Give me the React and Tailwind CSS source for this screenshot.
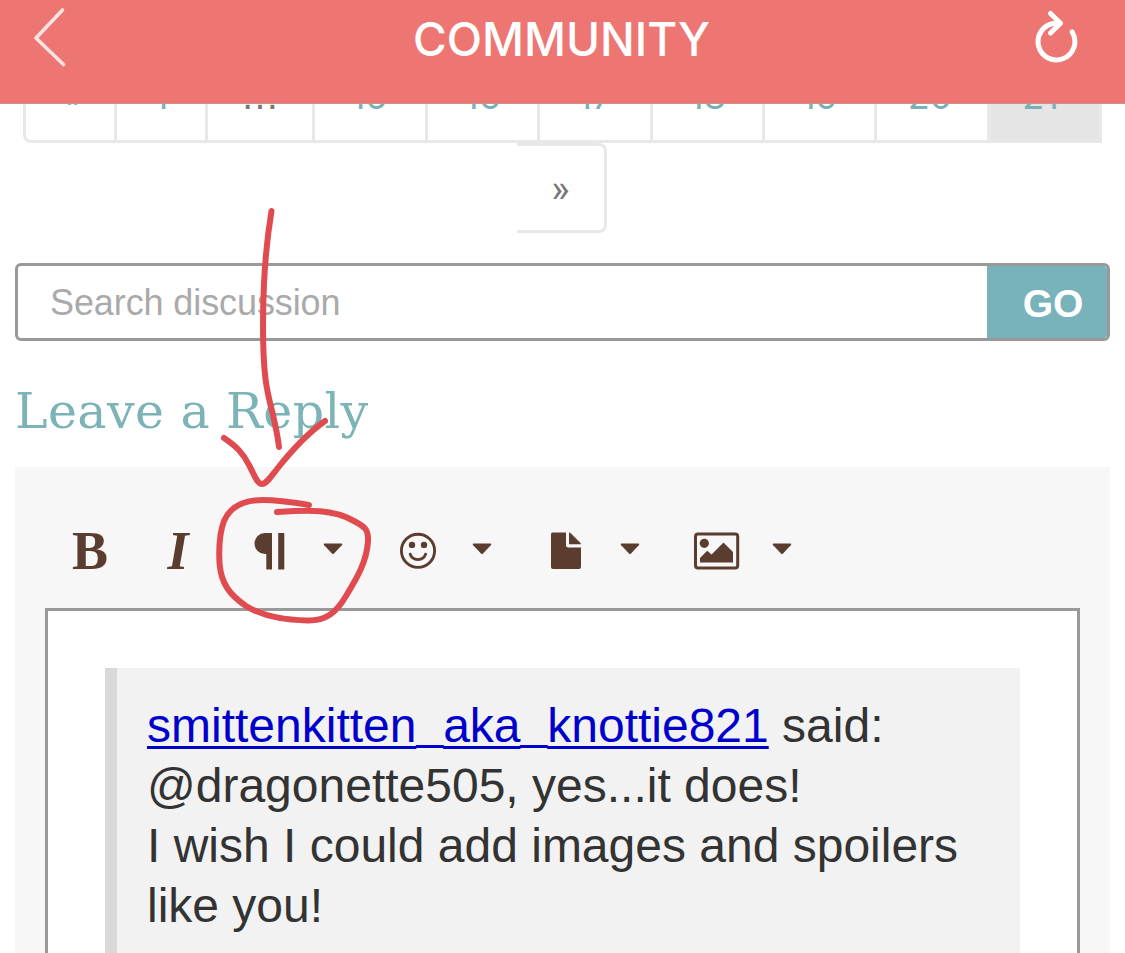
const pages = [
  { label: "«", className: "w-[91px] rounded-bl-lg pb-[2px] font-[Roboto,sans-serif] text-[38px] text-[#7bb0b6]" },
  { label: "1", className: "w-[91px] pb-[2px] text-[#7bb0b6]" },
  { label: "…", className: "w-[107px] font-['Liberation_Sans',sans-serif] text-[39px] text-[#777777]" },
  { label: "15", className: "w-[113px] pr-[2px] pb-[2px] text-[#7bb0b6]" },
  { label: "16", className: "w-[112px] pb-[2px] text-[#7bb0b6]" },
  { label: "17", className: "w-[113px] pb-[2px] text-[#7bb0b6]" },
  { label: "18", className: "w-[112px] pb-[2px] text-[#7bb0b6]" },
  { label: "19", className: "w-[112px] pb-[2px] text-[#7bb0b6]" },
  { label: "20", className: "w-[113px] pr-[4px] pb-[2px] text-[#7bb0b6]" },
  { label: "21", className: "w-[115px] border-r-[3px] bg-[#e5e5e5] pr-[8px] pb-[2px] text-[#7bb0b6]" },
];

function Header() {
  return (
    <header className="relative z-10 flex h-[104px] items-start justify-between border-b border-[#c98f8d] bg-[#ee7672] pl-[33px] pr-[46px]">
      <button className="mt-[7px]" aria-label="Back">
        <svg width="34" height="62" viewBox="0 0 34 62" fill="none" stroke="#fde3e2" strokeWidth="3.6" strokeLinecap="round" strokeLinejoin="round">
          <path d="M29.5 3 L3 31 L30.5 57.5" />
        </svg>
      </button>
      <h1 className="mt-[8px] ml-[23px] font-[Inter,sans-serif] text-[46px] leading-[62px] font-medium text-white">
        COMMUNITY
      </h1>
      <button className="mt-[9px]" aria-label="Refresh">
        <svg width="46" height="56" viewBox="0 0 46 56" fill="none" stroke="#fff" strokeWidth="5" strokeLinecap="round" strokeLinejoin="round">
          <path d="M39.200 23 A18.400 18.400 0 1 1 22 14.200 H27" />
          <path d="M17.500 4.500 L27.500 14.200 L17.500 24" />
        </svg>
      </button>
    </header>
  );
}

function Pagination() {
  return (
    <nav className="-mt-[51px] font-[Inter,sans-serif] text-[36px]">
      <div className="ml-[23px] flex h-[90px]">
        {pages.map((page) => (
          <a
            key={page.label}
            className={`flex items-center justify-center border-b-[3px] border-l-[3px] border-[#e8e8e8] ${page.className}`}
          >
            {page.label}
          </a>
        ))}
      </div>
      <a className="ml-[517px] flex h-[90px] w-[90px] items-center justify-center rounded-r-lg border-y-[3px] border-r-[3px] border-[#e8e8e8] pt-[2px] font-[Roboto,sans-serif] text-[39px] text-[#777777]">
        »
      </a>
    </nav>
  );
}

function SearchBar() {
  return (
    <form className="mx-[15px] mt-[30px] flex h-[78px] w-[1095px] overflow-hidden rounded-md border-[3px] border-[#999999]">
      <input
        className="min-w-0 flex-1 pt-[2px] pl-8 text-[36px] tracking-[-0.1px] placeholder:text-[#aaaaaa]"
        placeholder="Search discussion"
      />
      <button type="button" className="w-[120px] bg-[#78b3bb] pt-[4px] pl-[12px] text-[39px] font-bold text-white">
        GO
      </button>
    </form>
  );
}

function Caret({ className }) {
  return (
    <svg className={className} width="20" height="12" viewBox="0 0 20 12" fill="currentColor">
      <path d="M1.4 0.5 H18.6 Q20 0.9 18.8 2.2 L11 10.4 Q10 11.4 9 10.4 L1.2 2.2 Q0 0.9 1.4 0.5 Z" />
    </svg>
  );
}

function Toolbar() {
  return (
    <div className="flex h-[141px] items-start pt-[64px] pl-[57px] text-[#5b3d30]">
      <button className="-mt-px w-[36px] font-['Liberation_Serif',serif] text-[54px] leading-[42px] font-bold">B</button>
      <button className="-mt-px ml-[57px] w-[26px] font-['Liberation_Serif',serif] text-[54px] leading-[42px] font-bold italic">I</button>
      <svg className="ml-[63px]" width="31" height="40" viewBox="0 0 31 40" fill="currentColor">
        <path d="M11 2 H18 V38.5 H12.3 V23 H11 A10.5 10.5 0 0 1 11 2 Z" />
        <path d="M24.2 2 H30.3 V38.5 H24.2 Z" />
      </svg>
      <Caret className="mt-[12px] ml-[38px]" />
      <svg className="ml-[56px]" width="38" height="40" viewBox="0 0 38 40" fill="none" stroke="currentColor" strokeWidth="2.9">
        <circle cx="19" cy="19.8" r="16.6" />
        <path d="M11.2 23.2 A8 7.4 0 0 0 26.6 23.2" strokeLinecap="round" />
        <circle cx="13" cy="13.9" r="3.2" fill="currentColor" stroke="none" />
        <circle cx="25" cy="13.9" r="3.2" fill="currentColor" stroke="none" />
      </svg>
      <Caret className="mt-[12px] ml-[35px]" />
      <svg className="ml-[59px]" width="30" height="40" viewBox="0 0 30 40" fill="currentColor">
        <path d="M1.5 1.5 H15 V14.2 Q15 16.5 17.3 16.5 H30 V36 Q30 38 28 38 H2 Q0 38 0 36 V3 Q0 1.5 1.5 1.5 Z" />
        <path d="M18 1.5 Q19 1.7 20 2.6 L29 11.4 Q30 12.4 30 13.3 H18 Z" />
      </svg>
      <Caret className="mt-[12px] ml-[39px]" />
      <svg className="ml-[54px]" width="46" height="40" viewBox="0 0 46 40" fill="currentColor">
        <rect x="1.500" y="3" width="42.200" height="34" rx="2.500" fill="none" stroke="currentColor" strokeWidth="3" />
        <circle cx="10.300" cy="12.300" r="4.600" />
        <path d="M6 31.600 V27 L13.200 19.800 L17.500 23.500 L29.500 11.400 L39 21 V31.600 Z" />
      </svg>
      <Caret className="mt-[12px] ml-[32px]" />
    </div>
  );
}

// lifted so it lines up with the link underline
function Underscore() {
  return <span className="relative -top-[4px] inline-block">_</span>;
}

function Editor() {
  return (
    <section className="mx-[15px] h-[600px] w-[1095px] bg-[#f7f7f7]">
      <Toolbar />
      <div className="mx-[30px] h-[500px] border-[3px] border-[#999999] bg-white px-[57px] pt-[57px]">
        <blockquote className="h-[400px] border-l-[12px] border-[#d9d9d9] bg-[#f2f2f2] pt-[28px] pl-[30px] text-[48px] leading-[60px] text-[#333333]">
          <div className="h-[60px]">
            <a className="text-[#0000cc] underline decoration-[3px] underline-offset-[4px]">
              smittenkitten<Underscore />aka<Underscore />knottie821
            </a>{" "}
            said:
          </div>
          <div>@dragonette505, yes...it does!</div>
          <div>I wish I could add images and spoilers like you!</div>
        </blockquote>
      </div>
    </section>
  );
}

// hand-drawn arrow and circle pointing at the paragraph menu
function Annotation() {
  return (
    <svg
      className="pointer-events-none absolute top-[200px] left-[200px]"
      width="190"
      height="440"
      viewBox="200 200 190 440"
      fill="none"
      stroke="#e04b50"
      strokeWidth="6"
      strokeLinecap="round"
      strokeLinejoin="round"
    >
      <path d="M271.5 211 C266 244 263 280 263 325 C263 378 267 391 273 415 C276 428 278 438 279 447" />
      <path d="M224 438 C236 446 243 453 249 465 C254 474 257 484 262 484 C266 484 270 478 277 469 C292 450 308 433 325 421" />
      <path d="M309 505 C291 502 276 500 263 500 C243 500 230 507 224 521 C219 534 219 553 219.5 563 C221 584 230 595 246 606 C262 616 284 620 307 620.5 C326 621 336 613 346 596 C357 578 367 561 368 541 C368.500 529 365 527 354 521 C333 509 310 510 277 512" />
    </svg>
  );
}

export default function App() {
  return (
    <div className="relative h-[953px] w-[1125px] overflow-hidden bg-white font-['Liberation_Sans',Arial,sans-serif]">
      <Header />
      <Pagination />
      <SearchBar />
      <h2 className="mt-[37px] h-[89px] pl-[15px] font-['DejaVu_Serif',serif] text-[49px] leading-[68px] tracking-[0.4px] text-[#7bb3b7]">
        Leave a Reply
      </h2>
      <Editor />
      <Annotation />
    </div>
  );
}
